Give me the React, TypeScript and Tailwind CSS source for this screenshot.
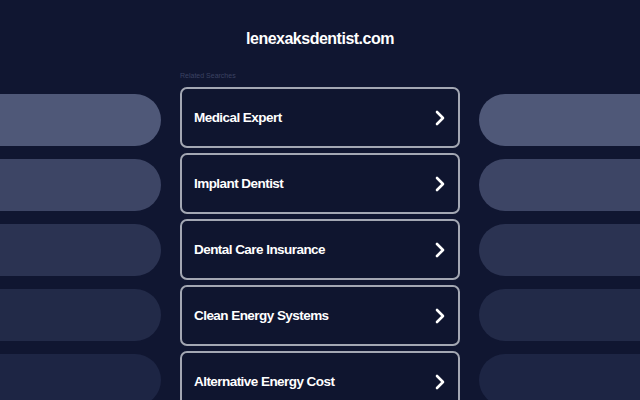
const searches = [
  "Medical Expert",
  "Implant Dentist",
  "Dental Care Insurance",
  "Clean Energy Systems",
  "Alternative Energy Cost",
];

const pillColors = ["bg-[#4f5878]", "bg-[#3d4565]", "bg-[#2b3352]", "bg-[#222a48]", "bg-[#1d2544]"];

function Chevron() {
  return (
    <svg width="12" height="16" viewBox="0 0 12 16" fill="none">
      <path d="M3 2l6 6-6 6" stroke="white" strokeWidth="2.6" strokeLinecap="round" strokeLinejoin="round" />
    </svg>
  );
}

export default function App() {
  return (
    <div
      className="w-[640px] h-[400px] overflow-hidden bg-[#101631] text-white"
      style={{ fontFamily: '"Liberation Sans", Arial, sans-serif' }}
    >
      <h1 className="pt-[30px] h-[58px] text-center text-[16px] font-bold leading-[18px] tracking-[-0.5px]">
        lenexaksdentist.com
      </h1>
      <div className="flex gap-[19px]">
        <div className="w-[161px] shrink-0 pt-[36px] flex flex-col gap-[13px]">
          {pillColors.map((c) => (
            <div key={c} className={`h-[52px] rounded-r-[26px] ${c}`} />
          ))}
        </div>
        <div className="w-[280px] shrink-0">
          <div className="pt-[14px] h-[29px] text-[7px] leading-[8px] text-[#3b4262]">Related Searches</div>
          <div className="flex flex-col gap-[5px]">
            {searches.map((s) => (
              <div
                key={s}
                className="h-[61px] rounded-[7px] border-2 border-[#a3a7b3] bg-[#0f152f] flex items-center justify-between pl-[12px] pr-[12px]"
              >
                <span className="pt-[2px] text-[13.5px] font-bold tracking-[-0.55px]">{s}</span>
                <Chevron />
              </div>
            ))}
          </div>
        </div>
        <div className="flex-1 pt-[36px] flex flex-col gap-[13px]">
          {pillColors.map((c) => (
            <div key={c} className={`h-[52px] w-[200px] rounded-l-[26px] ${c}`} />
          ))}
        </div>
      </div>
    </div>
  );
}
